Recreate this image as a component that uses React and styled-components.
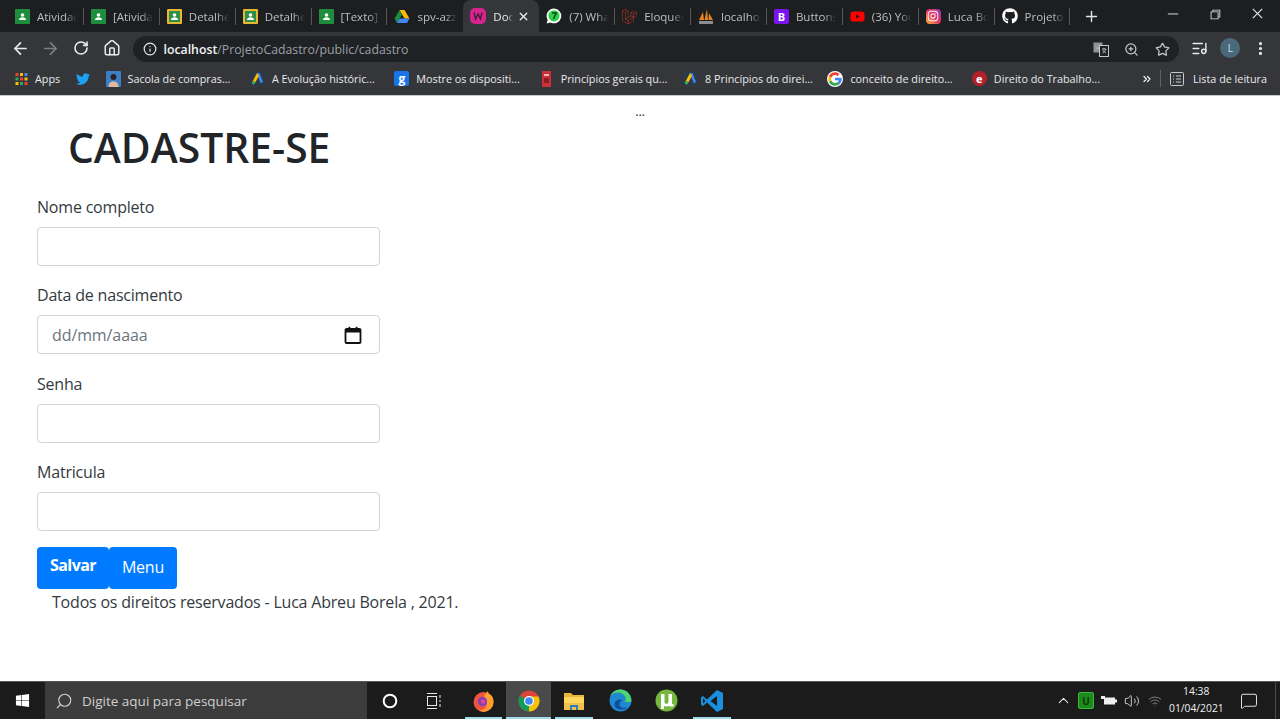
import React from "react";
import styled, { createGlobalStyle } from "styled-components";
import { FaGithub, FaTwitter, FaYoutube, FaInstagram, FaWindows } from "react-icons/fa";
import { SiLaravel } from "react-icons/si";
import { VscChromeMinimize, VscChromeRestore, VscChromeClose } from "react-icons/vsc";
import { ArrowLeft, ArrowRight, RotateCw, Home, Info, ZoomIn, Star, ListMusic, MoreVertical, Plus, X, ChevronsRight, ChevronUp, Volume2, Wifi, MessageSquare, Search } from "lucide-react";

const Global = createGlobalStyle`
  html, body { margin: 0; padding: 0; height: 100%; background: #fff; }
  #root { height: 100%; }
  * { box-sizing: border-box; }
`;

const Shell = styled.div`
  height: 100vh; display: flex; flex-direction: column; overflow: hidden;
  font-family: "Open Sans", "Noto Sans", sans-serif; color: #212529;
`;

/* Browser chrome */
const TabStrip = styled.div`
  height: 32px; flex: none; display: flex; align-items: stretch; padding-left: 8px; background: #1d1e20;
`;
const Tab = styled.div`
  position: relative; width: 75.9px; flex: none; display: flex; align-items: center; gap: 7px; padding-left: 7px;
  background: ${p => (p.$active ? "#35363a" : "transparent")};
  border-radius: ${p => (p.$active ? "8px 8px 0 0" : "0")};
  &::after {
    content: ""; position: absolute; right: 0; top: 8px; bottom: 7px; width: 1px;
    background: ${p => (p.$plain ? "transparent" : "#55575b")};
  }
`;
const TabTitle = styled.span`
  font-size: 11.5px; white-space: nowrap; overflow: hidden; width: ${p => p.$w || 40}px;
  color: ${p => (p.$active ? "#e8eaed" : "#bdbfc2")};
  -webkit-mask-image: linear-gradient(90deg, #000 70%, transparent 100%);
  mask-image: linear-gradient(90deg, #000 70%, transparent 100%);
`;
const TabClose = styled.span`
  display: flex; color: #eceef0; margin-left: -3px;
`;
const NewTab = styled.div`
  width: 43px; display: flex; align-items: center; justify-content: center; color: #dfe1e5;
`;
const WindowControls = styled.div`
  margin-left: auto; display: flex; align-items: center; padding: 0 1px 5px 0; color: #e6e6e6;
`;
const WindowButton = styled.span`
  width: 42.5px; display: flex; justify-content: center;
`;

const Toolbar = styled.div`
  height: 32px; flex: none; display: flex; align-items: center; padding: 0 4px 0 5px; background: #35363a;
`;
const NavButton = styled.span`
  width: 30.5px; flex: none; display: flex; justify-content: center; color: ${p => (p.$dim ? "#7d7f83" : "#e8eaed")};
`;
const Omnibox = styled.div`
  flex: 1; height: 26px; margin: 2px 6px 0 5.5px; border-radius: 13px; background: #202124;
  display: flex; align-items: center; padding: 0 9px 0 10px; font-size: 12.3px; color: #9aa0a6;
`;
const OmniIcon = styled.span`
  display: flex; color: #e8eaed; margin-right: 7px;
`;
const Host = styled.b`
  color: #f1f3f4; font-weight: 600;
`;
const OmniActions = styled.div`
  margin-left: auto; display: flex; align-items: center; gap: 15.5px; color: #c4c7c9;
`;
const Avatar = styled.span`
  width: 20px; height: 20px; border-radius: 50%; background: #4a6a7c; color: #cfe0ea; font-size: 10px;
  display: flex; align-items: center; justify-content: center;
`;

const Bookmarks = styled.div`
  height: 32px; flex: none; display: flex; align-items: center; padding: 0 13px 2px 15px; background: #35363a;
  border-bottom: 1px solid #c8c8c8; font-size: 10.8px; color: #e8eaed;
`;
const Bookmark = styled.div`
  width: ${p => p.$w}px; flex: none; display: flex; align-items: center; gap: 7px; white-space: nowrap;
`;
const ReadingList = styled.div`
  margin-left: auto; display: flex; align-items: center; white-space: nowrap;
`;
const Divider = styled.span`
  width: 1px; height: 17px; background: #5f6165; margin-right: 9px;
`;
const Overflow = styled.span`
  display: flex; color: #e8eaed; margin-right: 7px;
`;
const ListIcon = styled.span`
  display: flex; margin-right: 9px;
`;

/* Page */
const Page = styled.main`
  flex: 1; min-height: 0; background: #fff; padding: 6px 0 0 37px; font-size: 16px; letter-spacing: -0.2px;
`;
const Dots = styled.div`
  height: 20px; line-height: 18px; margin-left: -37px; text-align: center; font-size: 13px; color: #333;
`;
const Title = styled.h1`
  margin: 1px 0 24px 31px; font-size: 40.800px; font-weight: 600; line-height: 48px; color: #212529; letter-spacing: 0;
`;
const Form = styled.form`
  width: 343px; display: flex; flex-direction: column;
`;
const Group = styled.div`
  margin-bottom: 17.4px;
`;
const Label = styled.label`
  display: block; line-height: 24px; margin-bottom: 8px; color: #343a40; white-space: nowrap;
`;
const Input = styled.input`
  display: block; width: 100%; height: 39px; border: 1px solid #ced4da; border-radius: 4px; background: #fff; outline: none;
`;
const DateField = styled.div`
  width: 100%; height: 39px; border: 1px solid #ced4da; border-radius: 4px; display: flex; align-items: center;
  justify-content: space-between; padding: 0 17px 0 14px; color: #6c757d; letter-spacing: -0.1px;
`;
const Buttons = styled.div`
  display: flex; margin-top: -1.600px; height: 42px;
`;
const Button = styled.button`
  width: ${p => p.$w}px; height: 42px; border: 0; border-radius: 4px; background: #007bff; color: #fff; padding: 0 0 ${p => (p.$bold ? 5 : 2)}px;
  font: ${p => (p.$bold ? 700 : 400)} 16px "Open Sans", "Noto Sans", sans-serif;
  letter-spacing: ${p => (p.$bold ? "-0.6px" : "-0.2px")};
`;
const Footer = styled.p`
  margin: 1px 0 0; padding-left: 15px; line-height: 24px; color: #343a40; white-space: nowrap;
`;

/* Taskbar */
const Taskbar = styled.footer`
  height: 38px; flex: none; display: flex; align-items: stretch; background: #1b1b1b; border-top: 1px solid #555;
  color: #eee; font-family: "Open Sans", "Noto Sans", sans-serif;
`;
const StartButton = styled.span`
  width: 45px; flex: none; display: flex; align-items: center; justify-content: center; color: #fff;
`;
const SearchBox = styled.div`
  width: 322px; flex: none; display: flex; align-items: center; gap: 9px; padding-left: 10px; background: #3c3c3c;
  font-size: 13.5px; color: #cfcfcf;
`;
const TaskIcon = styled.span`
  width: ${p => p.$w || 45}px; flex: none; position: relative; display: flex; align-items: center; justify-content: center;
  background: ${p => (p.$active ? "#4a4a4a" : "transparent")};
  &::after {
    content: ""; position: absolute; bottom: 0; height: 2px; left: ${p => (p.$active ? 0 : "4px")}; right: ${p => (p.$active ? 0 : "4px")};
    background: ${p => (p.$open ? "#9fdcea" : "transparent")};
  }
`;
const Tray = styled.div`
  margin-left: auto; display: flex; align-items: center; padding-right: 4.500px; color: #e6e6e6;
`;
const TrayItem = styled.span`
  width: 23px; display: flex; justify-content: center;
`;
const Clock = styled.div`
  width: 54.500px; margin: 0 0 2px 2.500px; text-align: center; font-size: 10.300px; line-height: 17px; color: #f0f0f0; white-space: nowrap;
`;
const ActionCenter = styled.span`
  width: 52px; height: 37px; display: flex; justify-content: center; align-items: center; border-right: 1px solid #4a4a4a;
`;

/* Drawn icons */
const Classroom = ({ yellow }) => (
  <svg width="15" height="15" viewBox="0 0 15 15">
    <rect width="15" height="15" rx="1" fill={yellow ? "#e8b830" : "#1e8e3e"} />
    {yellow && <rect x="2" y="2" width="11" height="11" fill="#2e8f47" />}
    <circle cx="7.5" cy="6" r="1.8" fill="#fff" />
    <path d="M4 11c0-2 1.5-2.8 3.5-2.8S11 9 11 11z" fill="#fff" />
  </svg>
);
const Drive = () => (
  <svg width="16" height="15" viewBox="0 0 16 15">
    <path d="M5.5 1h5l5 8.5h-5z" fill="#fbbc04" />
    <path d="M5.5 1 .5 9.5 3 14l5-8.5z" fill="#1e8e3e" />
    <path d="M3 14h10l2.500-4.500h-10z" fill="#4285f4" />
  </svg>
);
const DocIcon = () => (
  <svg width="16" height="16" viewBox="0 0 16 16">
    <rect width="16" height="16" rx="5" fill="#d6248e" />
    <path d="M4 4.500 5.500 11 8 6l2.500 5L12 4.500" fill="none" stroke="#3a2030" strokeWidth="1.300" />
  </svg>
);
const WhatsApp = () => (
  <svg width="16" height="16" viewBox="0 0 16 16">
    <path d="M8 .5a7.400 7.400 0 0 0-6.300 11.200L.6 15.500l3.900-1A7.400 7.400 0 1 0 8 .5z" fill="#fff" />
    <circle cx="8" cy="7.800" r="5.600" fill="#2bd24c" />
    <path d="M6 5h4.200L7.500 11" fill="none" stroke="#0f3d1a" strokeWidth="1.500" />
  </svg>
);
const Sail = () => (
  <svg width="16" height="17" viewBox="0 0 16 17">
    <path d="M1 12 5 4l1 8zM6.500 12 9 1l1 11zM10.500 12 11 5l4 7z" fill="#e8851c" />
    <rect x="1" y="13" width="14" height="3" fill="#8a8c90" />
  </svg>
);
const BootstrapIcon = styled.span`
  width: 15px; height: 15px; border-radius: 2px; background: #7a13f0; color: #fff; font-size: 11px; font-weight: 700;
  display: flex; align-items: center; justify-content: center; flex: none;
`;
const InstaBadge = styled.span`
  width: 15px; height: 15px; border-radius: 4px; flex: none; display: flex; align-items: center; justify-content: center; color: #fff;
  background: linear-gradient(45deg, #f9b233, #e1306c 55%, #8a3ab9);
`;
const AppsGrid = () => (
  <svg width="13" height="12" viewBox="0 0 13 12">
    {[0, 1, 2].flatMap(r =>
      [0, 1, 2].map(c => (
        <rect key={`${r}${c}`} x={c * 4.500 + 0.500} y={r * 4.500} width="3" height="3"
          fill={[["#ea4335", "#fbbc04", "#4285f4"], ["#34a853", "#ea4335", "#fbbc04"], ["#fbbc04", "#34a853", "#ea4335"]][r][c]} />
      ))
    )}
  </svg>
);
const Sacola = () => (
  <svg width="15" height="16" viewBox="0 0 15 16">
    <rect width="15" height="16" rx="1" fill="#3b7fc4" />
    <circle cx="7.500" cy="6" r="3" fill="#2c2226" />
    <path d="M2.500 16c0-4 2-5.500 5-5.500s5 1.500 5 5.500z" fill="#e4b7a0" />
  </svg>
);
const Ads = () => (
  <svg width="15" height="15" viewBox="0 0 15 15">
    <rect width="15" height="15" fill="#2b3a46" />
    <path d="M7 2h2.500l3.500 9-2.300 1.500z" fill="#4285f4" />
    <path d="M7 2 2 11.500l2.300 1.500L9 5z" fill="#fbbc04" />
    <circle cx="3.500" cy="11.700" r="1.700" fill="#34a853" />
  </svg>
);
const Gloss = styled.span`
  width: 15px; height: 15px; flex: none; border-radius: 2px; background: #1a73e8; color: #fff; font-size: 12px; font-weight: 700;
  display: flex; align-items: center; justify-content: center; line-height: 1;
`;
const RedDoc = () => (
  <svg width="15" height="16" viewBox="0 0 15 16">
    <rect x="3" width="9" height="16" fill="#c9303a" />
    <rect x="5" y="3" width="5" height="2" fill="#f5b5b5" />
    <rect x="5" y="7" width="5" height="5" fill="#8e1c24" />
  </svg>
);
const GoogleG = ({ size = 16 }) => (
  <svg width={size} height={size} viewBox="0 0 48 48">
    <circle cx="24" cy="24" r="24" fill="#fff" />
    <path d="M44 24c0-1.500-.1-2.600-.4-4H24v8h11.300c-.5 2.700-2 5-4.300 6.500l6.600 5.100C41.500 36 44 30.600 44 24z" fill="#4285f4" />
    <path d="M24 44c5.400 0 10-1.800 13.600-4.900L31 34c-1.800 1.300-4.200 2-7 2-5.200 0-9.700-3.500-11.300-8.300l-6.900 5.300C9.100 39.700 16 44 24 44z" fill="#34a853" />
    <path d="M12.700 27.700a12 12 0 0 1 0-7.400l-6.900-5.300a20 20 0 0 0 0 18z" fill="#fbbc04" />
    <path d="M24 12c3 0 5.600 1 7.700 3l5.800-5.800C34 6 29.400 4 24 4 16 4 9.100 8.300 5.800 15l6.900 5.300C14.300 15.500 18.800 12 24 12z" fill="#ea4335" />
  </svg>
);
const RedE = styled.span`
  width: 15px; height: 15px; flex: none; border-radius: 50%; background: #b3202a; color: #fff; font-size: 11px; font-weight: 700;
  display: flex; align-items: center; justify-content: center;
`;
const Translate = () => (
  <svg width="16" height="15" viewBox="0 0 16 15">
    <rect x="0.500" y="0.500" width="9" height="10" fill="#8f9296" />
    <rect x="6.500" y="3.500" width="9" height="11" fill="#202124" stroke="#c4c7c9" />
    <path d="M3 6h4M9 7h4M11 6v1M9.500 11c2-1 3-2.500 3.500-4M10 8c.5 1.500 2 2.500 3 3" fill="none" stroke="#c4c7c9" strokeWidth="0.900" />
  </svg>
);
const ReadingGlyph = () => (
  <svg width="14" height="14" viewBox="0 0 14 14" fill="none" stroke="#c8cacc">
    <rect x="0.500" y="0.500" width="13" height="13" rx="1" />
    <path d="M3 4h1M6 4h5M3 7h1M6 7h5M3 10h1M6 10h5" />
  </svg>
);
const Firefox = () => (
  <svg width="24" height="24" viewBox="0 0 24 24">
    <circle cx="11.500" cy="13" r="10" fill="#f0543c" />
    <path d="M21.500 13A10 10 0 0 1 6 21c5 1 9-2 9-7 0-3-2-5-3-7 1-2 3-4 4-5 0 2 1 3 3 4 2 2 2.500 4 2.500 7z" fill="#ffa02e" />
    <circle cx="10.500" cy="12.500" r="4.500" fill="#7b3fc4" />
    <circle cx="11" cy="12.500" r="2.300" fill="#e8458b" />
  </svg>
);
const Chrome = () => (
  <svg width="22" height="22" viewBox="0 0 22 22">
    <circle cx="11" cy="11" r="10.500" fill="#db4437" />
    <path d="M11 11 1.900 5.800A10.500 10.500 0 0 0 11 21.500z" fill="#0f9d58" />
    <path d="M11 11v10.500A10.500 10.500 0 0 0 20.500 6.500H11z" fill="#f4c20d" />
    <circle cx="11" cy="11" r="5" fill="#fff" />
    <circle cx="11" cy="11" r="3.800" fill="#4285f4" />
  </svg>
);
const Folder = () => (
  <svg width="22" height="20" viewBox="0 0 22 20">
    <path d="M1 2h7l2 2h11v14a1 1 0 0 1-1 1H1z" fill="#e8b73a" />
    <rect x="1" y="6" width="20" height="6" fill="#fbd75e" />
    <rect x="1" y="12" width="20" height="7" fill="#f0c24a" />
    <path d="M7 19v-5h8v5h-2v-3H9v3z" fill="#2f7fbf" />
  </svg>
);
const Edge = () => (
  <svg width="23" height="23" viewBox="0 0 23 23">
    <circle cx="11.500" cy="11.500" r="11" fill="#1e88d0" />
    <path d="M22.500 12.500C22.500 6 17.500.5 11.500.5 7 .5 3 3 1.300 7c2-2.500 5-3.500 8-3.500 4 0 7.500 3 7.500 6.500 0 1-.5 2-1.500 2.500 3 1.500 7 .5 7-.5z" fill="#4fd46b" />
    <path d="M13.500 11c-4-1.500-8 1-8 4.500 0 3 3 5 7 5 3 0 5-1 6-2-3 1-6 .5-7.500-1.500-1.500-2 .5-5 2.500-6z" fill="#0f4f9c" />
  </svg>
);
const Torrent = () => (
  <svg width="23" height="23" viewBox="0 0 23 23">
    <circle cx="11.500" cy="11.500" r="11" fill="#76b83f" />
    <path d="M6 5h3.500v7.500c0 1.500.8 2.300 2 2.300s2-.8 2-2.300V5H17v10h1.500v2.500h-4l-.5-1c-1 1-4 1.500-5 0V20H6z" fill="#fff" />
  </svg>
);
const VSCode = () => (
  <svg width="24" height="24" viewBox="0 0 24 24">
    <path d="M17 1 23 4v16l-6 3-10-9.500L3 17l-2-1.500V8.500L3 7l4 3.500z" fill="#1a8fe0" />
    <path d="M17 7v10l-6.500-5z" fill="#1b1b1b" />
    <path d="M3 9.500v5l2.500-2.500z" fill="#1b1b1b" />
  </svg>
);
const Utray = styled.span`
  width: 16px; height: 17px; background: #1e8a1e; border: 1px solid #38b838; border-radius: 2px; color: #0d3d0d;
  font-size: 10px; font-weight: 700; display: flex; align-items: center; justify-content: center;
`;
const TaskView = () => (
  <svg width="17" height="16" viewBox="0 0 17 16" fill="none" stroke="#e8e8e8">
    <rect x="1.500" y="3.500" width="9" height="9" />
    <path d="M1 .5h10M1 15.500h10M14 2v3M14 7v2M14 11v3" />
  </svg>
);
const Calendar = () => (
  <svg width="18" height="18" viewBox="0 0 18 18">
    <path d="M2.500 3h13a1 1 0 0 1 1 1v12a1 1 0 0 1-1 1h-13a1 1 0 0 1-1-1V4a1 1 0 0 1 1-1z" fill="none" stroke="#111" strokeWidth="1.800" />
    <rect x="1.500" y="3" width="15" height="3.500" fill="#111" />
    <rect x="4.500" y=".8" width="1.800" height="3" fill="#111" />
    <rect x="11.700" y=".8" width="1.800" height="3" fill="#111" />
  </svg>
);

const tabs = [
  { icon: <Classroom />, title: "Atividade" },
  { icon: <Classroom />, title: "[Atividade" },
  { icon: <Classroom yellow />, title: "Detalhes" },
  { icon: <Classroom yellow />, title: "Detalhes" },
  { icon: <Classroom />, title: "[Texto] A" },
  { icon: <Drive />, title: "spv-azzz", plain: true },
];
const tabsAfter = [
  { icon: <WhatsApp />, title: "(7) Whats" },
  { icon: <SiLaravel size={15} color="#c0392b" />, title: "Eloquent" },
  { icon: <Sail />, title: "localhost" },
  { icon: <BootstrapIcon>B</BootstrapIcon>, title: "Buttons" },
  { icon: <FaYoutube size={15} color="#f00" />, title: "(36) You" },
  { icon: <InstaBadge><FaInstagram size={12} /></InstaBadge>, title: "Luca Bo" },
  { icon: <FaGithub size={16} color="#fff" />, title: "Projeto" },
];
const marks = [
  { icon: <Sacola />, title: "Sacola de compras..." },
  { icon: <Ads />, title: "A Evolução históric..." },
  { icon: <Gloss>g</Gloss>, title: "Mostre os dispositi..." },
  { icon: <RedDoc />, title: "Princípios gerais qu..." },
  { icon: <Ads />, title: "8 Princípios do direi..." },
  { icon: <GoogleG />, title: "conceito de direito..." },
];
const fields = ["Nome completo", "Data de nascimento", "Senha", "Matricula"];

export default function App() {
  return (
    <Shell>
      <Global />
      <TabStrip>
        {tabs.map((t, i) => (
          <Tab key={i} $plain={t.plain}>{t.icon}<TabTitle>{t.title}</TabTitle></Tab>
        ))}
        <Tab $active $plain>
          <DocIcon /><TabTitle $active $w={20}>Docs</TabTitle>
          <TabClose><X size={13} strokeWidth={2.5} /></TabClose>
        </Tab>
        {tabsAfter.map((t, i) => (
          <Tab key={i}>{t.icon}<TabTitle>{t.title}</TabTitle></Tab>
        ))}
        <NewTab><Plus size={17} strokeWidth={2} /></NewTab>
        <WindowControls>
          <WindowButton><VscChromeMinimize size={15} /></WindowButton>
          <WindowButton><VscChromeRestore size={14} /></WindowButton>
          <WindowButton><VscChromeClose size={15} /></WindowButton>
        </WindowControls>
      </TabStrip>

      <Toolbar>
        <NavButton><ArrowLeft size={19} strokeWidth={2.2} /></NavButton>
        <NavButton $dim><ArrowRight size={19} strokeWidth={2.2} /></NavButton>
        <NavButton><RotateCw size={16} strokeWidth={2.4} /></NavButton>
        <NavButton><Home size={18} strokeWidth={2} /></NavButton>
        <Omnibox>
          <OmniIcon><Info size={14} strokeWidth={2} /></OmniIcon>
          <span><Host>localhost</Host>/ProjetoCadastro/public/cadastro</span>
          <OmniActions>
            <Translate />
            <ZoomIn size={15} />
            <Star size={15} strokeWidth={2} />
          </OmniActions>
        </Omnibox>
        <NavButton><ListMusic size={17} /></NavButton>
        <NavButton><Avatar>L</Avatar></NavButton>
        <NavButton><MoreVertical size={17} strokeWidth={2.5} /></NavButton>
      </Toolbar>

      <Bookmarks>
        <Bookmark $w={61}><AppsGrid /><span>Apps</span></Bookmark>
        <Bookmark $w={29.5}><FaTwitter size={14} color="#1da1f2" /></Bookmark>
        {marks.map((m, i) => (
          <Bookmark key={i} $w={144.4}>{m.icon}<span>{m.title}</span></Bookmark>
        ))}
        <Bookmark $w={140}><RedE>e</RedE><span>Direito do Trabalho...</span></Bookmark>
        <ReadingList>
          <Overflow><ChevronsRight size={12} strokeWidth={2.5} /></Overflow>
          <Divider />
          <ListIcon><ReadingGlyph /></ListIcon>
          <span>Lista de leitura</span>
        </ReadingList>
      </Bookmarks>

      <Page>
        <Dots>...</Dots>
        <Title>CADASTRE-SE</Title>
        <Form>
          {fields.map((f, i) => (
            <Group key={f}>
              <Label>{f}</Label>
              {i === 1 ? <DateField>dd/mm/aaaa<Calendar /></DateField> : <Input type={i === 2 ? "password" : "text"} />}
            </Group>
          ))}
          <Buttons>
            <Button type="button" $w={72} $bold>Salvar</Button>
            <Button type="button" $w={68}>Menu</Button>
          </Buttons>
        </Form>
        <Footer>Todos os direitos reservados - Luca Abreu Borela , 2021.</Footer>
      </Page>

      <Taskbar>
        <StartButton><FaWindows size={15} /></StartButton>
        <SearchBox><Search size={18} strokeWidth={1.5} style={{ transform: "scaleX(-1)" }} />Digite aqui para pesquisar</SearchBox>
        <TaskIcon><svg width="16" height="16" viewBox="0 0 16 16"><circle cx="8" cy="8" r="6.300" fill="none" stroke="#fff" strokeWidth="2" /></svg></TaskIcon>
        <TaskIcon><TaskView /></TaskIcon>
        <TaskIcon $w={4} />
        <TaskIcon $open><Firefox /></TaskIcon>
        <TaskIcon $open $active><Chrome /></TaskIcon>
        <TaskIcon $open $w={46}><Folder /></TaskIcon>
        <TaskIcon $w={47}><Edge /></TaskIcon>
        <TaskIcon><Torrent /></TaskIcon>
        <TaskIcon $open $w={46}><VSCode /></TaskIcon>
        <Tray>
          <TrayItem><ChevronUp size={17} strokeWidth={1.5} /></TrayItem>
          <TrayItem><Utray>U</Utray></TrayItem>
          <TrayItem><svg width="16" height="12" viewBox="0 0 16 12"><rect x="3" y="2.500" width="11" height="7" fill="#eee" /><rect x="14" y="4.500" width="2" height="3" fill="#eee" /><path d="M0 1h4v3H0z" fill="#eee" /></svg></TrayItem>
          <TrayItem><Volume2 size={16} strokeWidth={1.3} /></TrayItem>
          <TrayItem><Wifi size={14} strokeWidth={1.5} color="#8a8a8a" /></TrayItem>
          <Clock>14:38<br />01/04/2021</Clock>
          <ActionCenter><MessageSquare size={18} strokeWidth={1.3} /></ActionCenter>
        </Tray>
      </Taskbar>
    </Shell>
  );
}
